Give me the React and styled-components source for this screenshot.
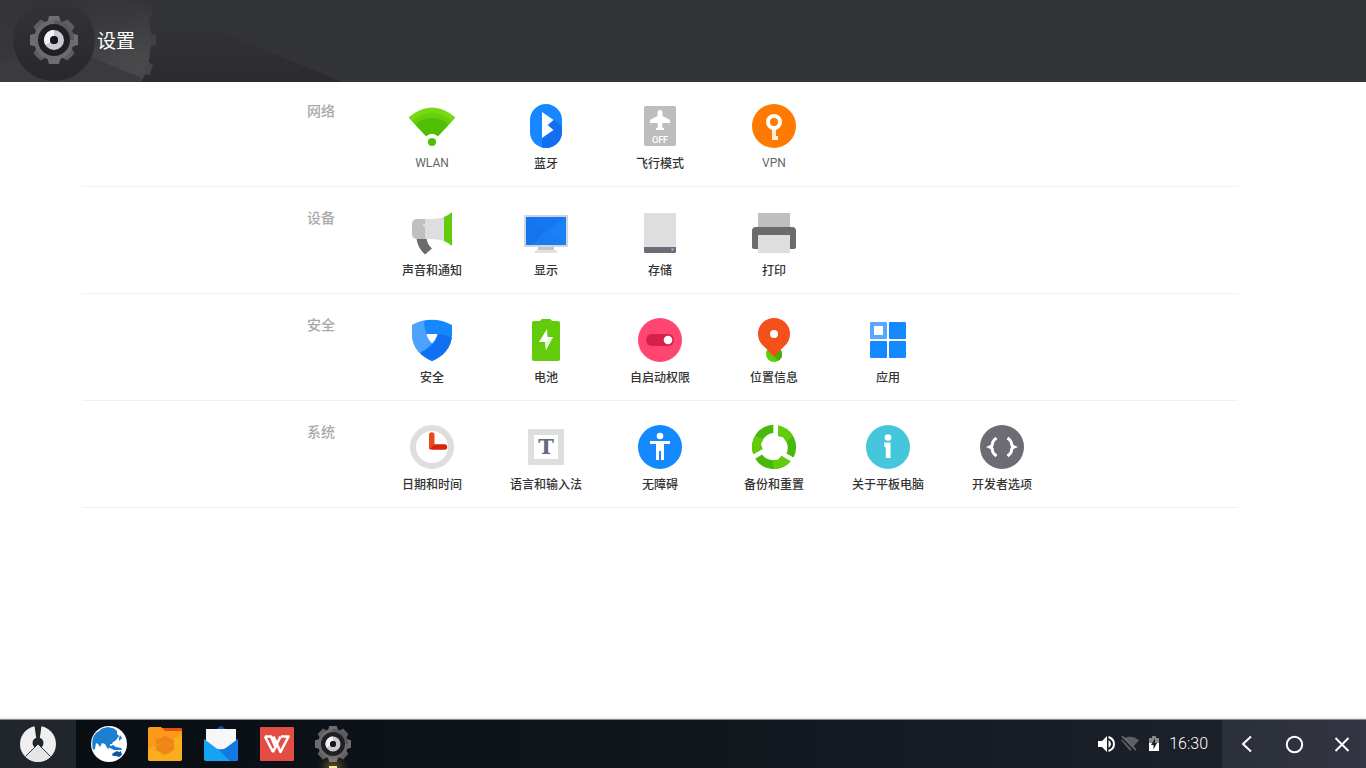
import React, { useState } from 'react'
import styled, { createGlobalStyle } from 'styled-components'

const GlobalStyle = createGlobalStyle`
  * {
    box-sizing: border-box;
  }
  body {
    margin: 0;
    background: #fff;
    font-family: Roboto, 'Noto Sans CJK SC', sans-serif;
  }
  button {
    margin: 0;
    padding: 0;
    border: none;
    background: none;
    color: inherit;
    font-family: inherit;
    cursor: pointer;
  }
  svg {
    display: block;
  }
`

const Page = styled.div`
  display: flex;
  flex-direction: column;
  min-height: 100vh;
`

const Header = styled.header`
  position: relative;
  display: flex;
  align-items: center;
  height: 82px;
  padding: 0 30px 2px;
  overflow: hidden;
  background: linear-gradient(#323337, #333438);
`

const HeaderArt = styled.svg`
  position: absolute;
  top: 0;
  left: 0;
`

const HeaderContent = styled.div`
  position: relative;
  display: flex;
  align-items: center;
  gap: 19px;
`

const Title = styled.h1`
  margin: 0;
  padding-top: 4px;
  color: #fff;
  font-size: 19px;
  font-weight: 400;
  line-height: 28px;
`

const Main = styled.main`
  flex: 1;
  padding: 0 128px 0 82px;
`

const StyledSection = styled.section`
  display: flex;
  align-items: flex-start;
  padding: 20px 0 13px 225px;
  border-bottom: 1px solid #f1f1f1;

  & + & {
    padding-top: 22px;
  }
`

const SectionTitle = styled.h2`
  flex: none;
  width: 68px;
  margin: 0;
  color: #a9a9a9;
  font-size: 14px;
  font-weight: 500;
  line-height: 18px;
`

const Items = styled.div`
  display: flex;
  flex-wrap: wrap;
`

const Item = styled.button`
  display: flex;
  flex-direction: column;
  align-items: center;
  gap: 5px;
  width: 114px;
`

const ItemLabel = styled.span`
  color: ${({ $latin }) => ($latin ? '#666' : '#333')};
  font-size: 12px;
  font-weight: ${({ $latin }) => ($latin ? 400 : 500)};
  line-height: ${({ $latin }) => ($latin ? 16 : 18)}px;
`

const Taskbar = styled.footer`
  display: flex;
  height: 49px;
  border-top: 1px solid #85878a;
  background: linear-gradient(90deg, #080d12, #10151c 45%, #1f232d);
  box-shadow: 0 -1px 2px rgba(0, 0, 0, 0.12);
`

const StartButton = styled.button`
  display: flex;
  align-items: center;
  justify-content: center;
  width: 76px;
  background: #20262b;
`

const Apps = styled.div`
  display: flex;
  flex: 1;
  padding-left: 5px;
`

const AppButton = styled.button`
  position: relative;
  display: flex;
  align-items: center;
  justify-content: center;
  width: 56px;
`

const ActiveMark = styled.span`
  position: absolute;
  bottom: 0;
  left: 24px;
  width: 8px;
  height: 2px;
  background: #ffe7a0;
  box-shadow: 0 0 10px 4px rgba(240, 190, 90, 0.45);
`

const Tray = styled.div`
  display: flex;
  align-items: center;
  gap: 6px;
  padding-right: 14px;
  color: #fff;
`

const Clock = styled.time`
  font-size: 16px;
  font-weight: 300;
  line-height: 20px;
`

const Nav = styled.nav`
  display: flex;
  background: linear-gradient(90deg, #2b2f39, #333642);
`

const NavButton = styled.button`
  display: flex;
  align-items: center;
  justify-content: center;
  width: 48px;
`

const Icon = ({ children }) => (
  <svg width="48" height="48" viewBox="0 0 48 48" aria-hidden="true">{children}</svg>
)

const AppIcon = ({ children }) => (
  <svg width="36" height="36" viewBox="0 0 36 36" aria-hidden="true">{children}</svg>
)

const teeth = [0, 45, 90, 135, 180, 225, 270, 315]

const Gear = ({ size }) => (
  <svg width={size} height={size} viewBox="0 0 48 48" aria-hidden="true">
    {teeth.map(a => (
      <path key={a} d="M17 7L19 0H29L31 7Z" fill={a % 90 ? '#5e5e63' : '#6d6d72'} transform={`rotate(${a} 24 24)`} />
    ))}
    <circle cx="24" cy="24" r="20" fill="#6a6a6f" />
    <path d="M24 4A20 20 0 0 1 44 24H24Z" fill="#58585d" />
    <circle cx="24" cy="24" r="16" fill="#202023" />
    <circle cx="24" cy="24" r="7" fill="none" stroke="#c9c9d2" strokeWidth="6" />
    <path d="M24 17A7 7 0 0 0 18 27.5" fill="none" stroke="#f3f3f7" strokeWidth="6" />
    <circle cx="24" cy="24" r="4" fill="#17171a" />
  </svg>
)

const bigTeeth = [-53, -34, -17, 0, 17, 34, 51]

const Backdrop = () => (
  <HeaderArt width="360" height="82" viewBox="0 0 360 82" aria-hidden="true">
    <defs>
      <linearGradient id="cast" x1="0" y1="0" x2="0" y2="1">
        <stop offset="0.25" stopColor="#2c2b2f" stopOpacity="0" />
        <stop offset="1" stopColor="#2b2a2e" />
      </linearGradient>
      <linearGradient id="disc" x1="0" y1="0" x2="1" y2="0.4">
        <stop offset="0.5" stopColor="#38383b" />
        <stop offset="1" stopColor="#49494b" />
      </linearGradient>
      <linearGradient id="fade" x1="0" y1="0" x2="0" y2="1">
        <stop offset="0" stopColor="#333438" stopOpacity="0.9" />
        <stop offset="0.7" stopColor="#333438" stopOpacity="0" />
      </linearGradient>
      <linearGradient id="well" x1="0" y1="0" x2="0" y2="1">
        <stop offset="0" stopColor="#343437" />
        <stop offset="1" stopColor="#28282c" />
      </linearGradient>
    </defs>
    <path d="M120 0H145L342 82H120Z" fill="url(#cast)" />
    {bigTeeth.map(a => (
      <path key={a} d="M148 32L156 35V45L148 48Z" fill="#454548" transform={`rotate(${a} 54 40)`} />
    ))}
    <circle cx="54" cy="40" r="97" fill="url(#disc)" />
    <rect width="160" height="82" fill="url(#fade)" />
    <path d="M0 63L54 42L142 78L141 82H0Z" fill="#3b3b3e" />
    <circle cx="54" cy="40" r="41" fill="url(#well)" />
  </HeaderArt>
)

const WlanIcon = () => (
  <Icon>
    <clipPath id="fan"><path d="M.5 15.5Q24-4.5 47.5 15.5L30 34Q24 29 18 34Z" /></clipPath>
    <g clipPath="url(#fan)">
      <rect width="48" height="48" fill="#78d912" />
      <circle cx="24" cy="40" r="29" fill="#69cd0a" />
      <circle cx="24" cy="40" r="24" fill="#4fbf04" />
    </g>
    <circle cx="24" cy="40" r="4" fill="#4fbf04" />
  </Icon>
)

const BluetoothIcon = () => (
  <Icon>
    <rect x="8" y="2" width="32" height="44" rx="16" fill="#1687ff" />
    <path d="M31.5 17.5L40 24V30A16 16 0 0 1 24 46L20 45.5V36Z" fill="#1270f0" />
    <path d="M20 10L31.5 18L25.5 23L31.5 28L20 36Z" fill="#fff" />
  </Icon>
)

const AirplaneIcon = () => (
  <Icon>
    <rect x="8" y="4" width="32" height="40" rx="2" fill="#bdbdbd" />
    <path d="M24 8Q26.500 8 26.500 11V14L34 18V21H26.500L26 25L28 26.500V28H20V26.500L22 25L21.500 21H14V18L21.500 14V11Q21.500 8 24 8Z" fill="#fff" />
    <text x="24" y="41" textAnchor="middle" fontSize="9" fontWeight="500" fill="#fff">OFF</text>
  </Icon>
)

const VpnIcon = () => (
  <Icon>
    <circle cx="24" cy="24" r="22" fill="#ff7a00" />
    <path d="M22 26H26V34H28V38H22Z" fill="#fff1d0" />
    <circle cx="24" cy="20" r="6" fill="none" stroke="#fff" strokeWidth="4" />
  </Icon>
)

const SoundIcon = () => (
  <Icon>
    <path d="M8.500 29H18.500Q19 35 24 39.500L17 45.500Q9 38 8.500 29Z" fill="#6b6b6b" />
    <path d="M17 10H8Q4 11 4 15V25Q4 29 8 30H17Z" fill="#bfbfbf" />
    <path d="M17 10Q30 10.500 36 8V32Q30 29.500 17 30Z" fill="#dedede" />
    <path d="M14 15.500H17V18Z" fill="#eee" />
    <path d="M36 8Q40 6.500 44 3V37Q40 33.500 36 32Z" fill="#62cb0c" />
  </Icon>
)

const DisplayIcon = () => (
  <Icon>
    <rect x="2" y="6" width="44" height="32" rx="1" fill="#cfd5dd" />
    <rect x="4" y="8" width="40" height="28" fill="#1478f2" />
    <path d="M4 8L24 22L10 36H4Z" fill="#1474ef" />
    <path d="M44 8L24 22L10 36H44Z" fill="#1a80f5" />
    <path d="M24 22L44 36H10Z" fill="#187cf3" />
    <path d="M16 38H32V41H16Z" fill="#c2c4c7" />
    <path d="M14 41H34L36 44H12Z" fill="#e2e2e2" />
  </Icon>
)

const StorageIcon = () => (
  <Icon>
    <rect x="8" y="4" width="32" height="36" rx="1" fill="#dedede" />
    <path d="M8 38H40V43Q40 44 39 44H9Q8 44 8 43Z" fill="#6b6d75" />
    <circle cx="36.500" cy="40.500" r="1.300" fill="#7fb2f0" />
  </Icon>
)

const PrintIcon = () => (
  <Icon>
    <rect x="8" y="4" width="32" height="18" fill="#bfbfbf" />
    <path d="M6 18H42Q46 18 46 22V38Q46 40 44 40H4Q2 40 2 38V22Q2 18 6 18Z" fill="#6b6b6e" />
    <rect x="8" y="26" width="32" height="18" fill="#dedede" />
  </Icon>
)

const SecurityIcon = () => (
  <Icon>
    <clipPath id="shield"><path d="M4 9Q24-1.500 44 9V18C44 32 34 41 24 45C14 41 4 32 4 18Z" /></clipPath>
    <g clipPath="url(#shield)">
      <rect width="48" height="48" fill="#1488ff" />
      <path d="M16 0Q15 17 24 27Q18 34 12 37L0 48V0Z" fill="#4ba3ff" />
      <path d="M29.500 18Q36 18 48 23V48H10L13 36Q28 31 29.500 18Z" fill="#1070f2" />
    </g>
    <path d="M18.500 18H29.500Q28.500 23 24 27.500Q19.500 23 18.500 18Z" fill="#fff" />
  </Icon>
)

const BatteryIcon = () => (
  <Icon>
    <path d="M12 5H18Q19 3 20 3H28Q29 3 30 5H36Q38 5 38 7V43Q38 45 36 45H12Q10 45 10 43V7Q10 5 12 5Z" fill="#62cb0c" />
    <path d="M25 13L17 26H23L24 34L31 21H25.500Z" fill="#fff" />
    <path d="M23 26L31 21L24 34Z" fill="#e3f7cf" />
  </Icon>
)

const AutostartIcon = () => (
  <Icon>
    <circle cx="24" cy="24" r="22" fill="#ff4570" />
    <rect x="10" y="18" width="28" height="12" rx="6" fill="#d82048" />
    <circle cx="32" cy="24" r="4.300" fill="#fff" />
  </Icon>
)

const LocationIcon = () => (
  <Icon>
    <circle cx="24" cy="38" r="8" fill="#62cb0c" />
    <path d="M18 34L24 40L28 45A8 8 0 0 0 32 37L30 33Z" fill="#45ae08" />
    <path d="M24 41Q19 35 12.500 29A16 16 0 1 1 35.500 29Q29 35 24 41Z" fill="#f4501c" />
    <circle cx="24" cy="18" r="4" fill="#fff" />
  </Icon>
)

const AppsIcon = () => (
  <Icon>
    <rect x="6" y="6" width="17" height="17" rx="1" fill="#57a6ff" />
    <rect x="10" y="10" width="9" height="9" fill="#fff" />
    <rect x="25" y="6" width="17" height="17" rx="1" fill="#1488ff" />
    <rect x="6" y="25" width="17" height="17" rx="1" fill="#1488ff" />
    <rect x="25" y="25" width="17" height="17" rx="1" fill="#1488ff" />
  </Icon>
)

const DateIcon = () => (
  <Icon>
    <circle cx="24" cy="24" r="19" fill="#fff" stroke="#dedede" strokeWidth="6" />
    <path d="M24 24H36.500" stroke="#d92408" strokeWidth="5.500" strokeLinecap="round" />
    <path d="M21 26.500V12A2.700 2.700 0 0 1 26.500 12V21.500Z" fill="#ea4a1a" />
  </Icon>
)

const LanguageIcon = () => (
  <Icon>
    <rect x="6" y="6" width="36" height="36" rx="1" fill="#dedede" />
    <rect x="12" y="12" width="24" height="24" fill="#fff" />
    <text x="24" y="31" textAnchor="middle" fontFamily="DejaVu Serif, serif" fontSize="21" fontWeight="700" fill="#656a76">T</text>
  </Icon>
)

const AccessibilityIcon = () => (
  <Icon>
    <circle cx="24" cy="24" r="22" fill="#1488ff" />
    <circle cx="24" cy="13" r="3.300" fill="#fff" />
    <path d="M14 18H34V21H28V37H25V28H23V37H20V21H14Z" fill="#fff" />
  </Icon>
)

const BackupIcon = () => (
  <Icon>
    {[0, 120, 240].map(a => (
      <g key={a} transform={`rotate(${a} 24 24)`}>
        <path d="M28 2.400A22 22 0 0 1 43.500 34.500L36.500 30.500Q39 25 36.500 19L33 14L28 13Z" fill="#48b80a" />
        <path d="M28 2.400A22 22 0 0 1 43 13L36.500 19L33 14L28 13Z" fill="#62cb0c" />
      </g>
    ))}
  </Icon>
)

const AboutIcon = () => (
  <Icon>
    <circle cx="24" cy="24" r="22" fill="#44c7dd" />
    <circle cx="24" cy="14.500" r="3.300" fill="#fff" />
    <path d="M20 19.500H26.500V35H21.800V24.500L20 23Z" fill="#fff" />
  </Icon>
)

const DeveloperIcon = () => (
  <Icon>
    <circle cx="24" cy="24" r="22" fill="#6b6c74" />
    <g fill="none" stroke="#fff" strokeWidth="3">
      <path d="M18.500 15Q14.500 18 14.500 20.500Q14.500 23 12 24Q14.500 25 14.500 27.500Q14.500 30 18.500 33" />
      <path d="M29.500 15Q33.500 18 33.500 20.500Q33.500 23 36 24Q33.500 25 33.500 27.500Q33.500 30 29.500 33" />
    </g>
  </Icon>
)

const StartIcon = () => (
  <AppIcon>
    <circle cx="18" cy="18" r="18" fill="#efefef" />
    <path d="M14.500 0H21.500L19.500 14H16.500Z" fill="#20262b" />
    <circle cx="18" cy="17" r="5.500" fill="#20262b" />
    <path d="M18 18L5.500 30.500A18 18 0 0 0 30.500 30.500Z" fill="#e6e6e6" />
    <path d="M5.500 30.500L18 18L30.500 30.500" fill="none" stroke="#33383c" strokeWidth="1" />
  </AppIcon>
)

const BrowserIcon = () => (
  <AppIcon>
    <circle cx="18" cy="18" r="18" fill="#fff" />
    <path d="M1.500 22Q0 12 5 7L8 5L11 2.500L17 1L23 2.500L26 5L26 8L28 10L26 13L24 15L22 16L21 18L19 18L19 21L17 23L15 20L14 18L11 17L9 21L7 18L5 17L4 23L2.500 24Z" fill="#1c80d2" />
    <path d="M17 19L20 20L22 19L25 21L30 22L31 24L27 24L23 24L19 22ZM28 12L29 9L31 12L28 15Z" fill="#1878ca" />
    <path d="M21 28L24 26L26 25L28 26L30 25L31 29L28 31L25 30L22 30Z" fill="#11589c" />
  </AppIcon>
)

const FilesIcon = () => (
  <AppIcon>
    <path d="M14 2H34Q35 2 35 3V12H14Z" fill="#e4500e" />
    <path d="M1 3Q1 1 3 1H14L18 5H35V33Q35 35 33 35H3Q1 35 1 33Z" fill="#fb9a18" />
    <path d="M1 23L18 16L35 9V33Q35 35 33 35H3Q1 35 1 33Z" fill="#fcb520" opacity="0.7" />
    <path d="M18 10L27 14V24L18 29L9 24V14Z" fill="#ee8518" />
    <path d="M9 18L18 22L27 18M9 20L18 16L27 20" fill="none" stroke="#f2901b" />
  </AppIcon>
)

const MailIcon = () => (
  <AppIcon>
    <path d="M1 15L16 1Q18-1 20 1L35 15Z" fill="#174fa8" />
    <path d="M3 3H33V26H3Z" fill="#f7f7f7" />
    <path d="M1 13L13 22Q18 25 23 22L35 13V33Q35 35 33 35H3Q1 35 1 33Z" fill="#16a3f4" />
    <path d="M35 13L23 22Q19 24.500 15 23L27 35H33Q35 35 35 33Z" fill="#1478e2" />
  </AppIcon>
)

const WpsIcon = () => (
  <AppIcon>
    <rect x="1" y="1" width="34" height="34" rx="1" fill="#e34d44" />
    <path d="M6 10.500H12L16 20M14 26L6 10.500M14 26L21.500 10.500M14.500 10.500L21.500 26L29.500 10.500H22" fill="none" stroke="#fff" strokeWidth="2.600" strokeLinejoin="round" />
  </AppIcon>
)

const VolumeIcon = () => (
  <svg width="18" height="18" viewBox="0 0 18 18" role="img" aria-label="音量">
    <path d="M1 6H5L10 1V17L5 12H1Z" fill="#fff" />
    <path d="M11.500 5Q14 6.500 14 9Q14 11.500 11.500 13Z" fill="#fff" />
    <path d="M11.500 2Q17 4 17 9Q17 14 11.500 16" fill="none" stroke="#fff" strokeWidth="2" />
  </svg>
)

const NoWifiIcon = () => (
  <svg width="18" height="18" viewBox="0 0 18 18" role="img" aria-label="无网络">
    <path d="M0 5Q9-2 18 5L9 16Z" fill="#5c5f65" />
    <path d="M0 2L14 16" stroke="#1d222b" strokeWidth="2" />
    <path d="M1 1L15 15" stroke="#6c6f75" strokeWidth="1.500" />
  </svg>
)

const ChargeIcon = () => (
  <svg width="18" height="18" viewBox="0 0 18 18" role="img" aria-label="充电中">
    <path d="M4 3H7V1H11V3H14V8H4Z" fill="#85888c" />
    <path d="M4 8H14V16H4Z" fill="#fff" />
    <path d="M10 3.500L6 10H8.500V14.500L12 8H10Z" fill="#1d222b" />
  </svg>
)

const sections = [
  {
    title: '网络',
    items: [
      { name: 'WLAN', icon: WlanIcon, latin: true },
      { name: '蓝牙', icon: BluetoothIcon },
      { name: '飞行模式', icon: AirplaneIcon },
      { name: 'VPN', icon: VpnIcon, latin: true },
    ],
  },
  {
    title: '设备',
    items: [
      { name: '声音和通知', icon: SoundIcon },
      { name: '显示', icon: DisplayIcon },
      { name: '存储', icon: StorageIcon },
      { name: '打印', icon: PrintIcon },
    ],
  },
  {
    title: '安全',
    items: [
      { name: '安全', icon: SecurityIcon },
      { name: '电池', icon: BatteryIcon },
      { name: '自启动权限', icon: AutostartIcon },
      { name: '位置信息', icon: LocationIcon },
      { name: '应用', icon: AppsIcon },
    ],
  },
  {
    title: '系统',
    items: [
      { name: '日期和时间', icon: DateIcon },
      { name: '语言和输入法', icon: LanguageIcon },
      { name: '无障碍', icon: AccessibilityIcon },
      { name: '备份和重置', icon: BackupIcon },
      { name: '关于平板电脑', icon: AboutIcon },
      { name: '开发者选项', icon: DeveloperIcon },
    ],
  },
]

const apps = [
  { name: '浏览器', icon: BrowserIcon },
  { name: '文件', icon: FilesIcon },
  { name: '邮件', icon: MailIcon },
  { name: 'WPS', icon: WpsIcon },
  { name: '设置', icon: () => <Gear size={36} /> },
]

const Section = ({ title, items }) => (
  <StyledSection>
    <SectionTitle>{title}</SectionTitle>
    <Items>
      {items.map(({ name, icon: ItemIcon, latin }) => (
        <Item key={name} type="button">
          <ItemIcon />
          <ItemLabel $latin={latin}>{name}</ItemLabel>
        </Item>
      ))}
    </Items>
  </StyledSection>
)

export default () => {
  const [active, setActive] = useState('设置')

  return <>
    <GlobalStyle />
    <Page>
      <Header>
        <Backdrop />
        <HeaderContent>
          <Gear size={48} />
          <Title>设置</Title>
        </HeaderContent>
      </Header>
      <Main>
        {sections.map(s => <Section key={s.title} title={s.title} items={s.items} />)}
      </Main>
      <Taskbar>
        <StartButton type="button" aria-label="开始"><StartIcon /></StartButton>
        <Apps>
          {apps.map(({ name, icon: BarIcon }) => (
            <AppButton key={name} type="button" aria-label={name} onClick={() => setActive(name)}>
              <BarIcon />
              {active === name && <ActiveMark />}
            </AppButton>
          ))}
        </Apps>
        <Tray>
          <VolumeIcon />
          <NoWifiIcon />
          <ChargeIcon />
          <Clock>16:30</Clock>
        </Tray>
        <Nav>
          <NavButton type="button" aria-label="返回">
            <svg width="20" height="20" viewBox="0 0 20 20" fill="none" stroke="#fff" strokeWidth="2"><path d="M15 2.500L7 10L15 17.500" /></svg>
          </NavButton>
          <NavButton type="button" aria-label="主页">
            <svg width="20" height="20" viewBox="0 0 20 20" fill="none" stroke="#fff" strokeWidth="2"><circle cx="10.500" cy="10.500" r="7.700" /></svg>
          </NavButton>
          <NavButton type="button" aria-label="关闭">
            <svg width="20" height="20" viewBox="0 0 20 20" fill="none" stroke="#fff" strokeWidth="2"><path d="M3.500 4L16.500 17M16.500 4L3.500 17" /></svg>
          </NavButton>
        </Nav>
      </Taskbar>
    </Page>
  </>
}
